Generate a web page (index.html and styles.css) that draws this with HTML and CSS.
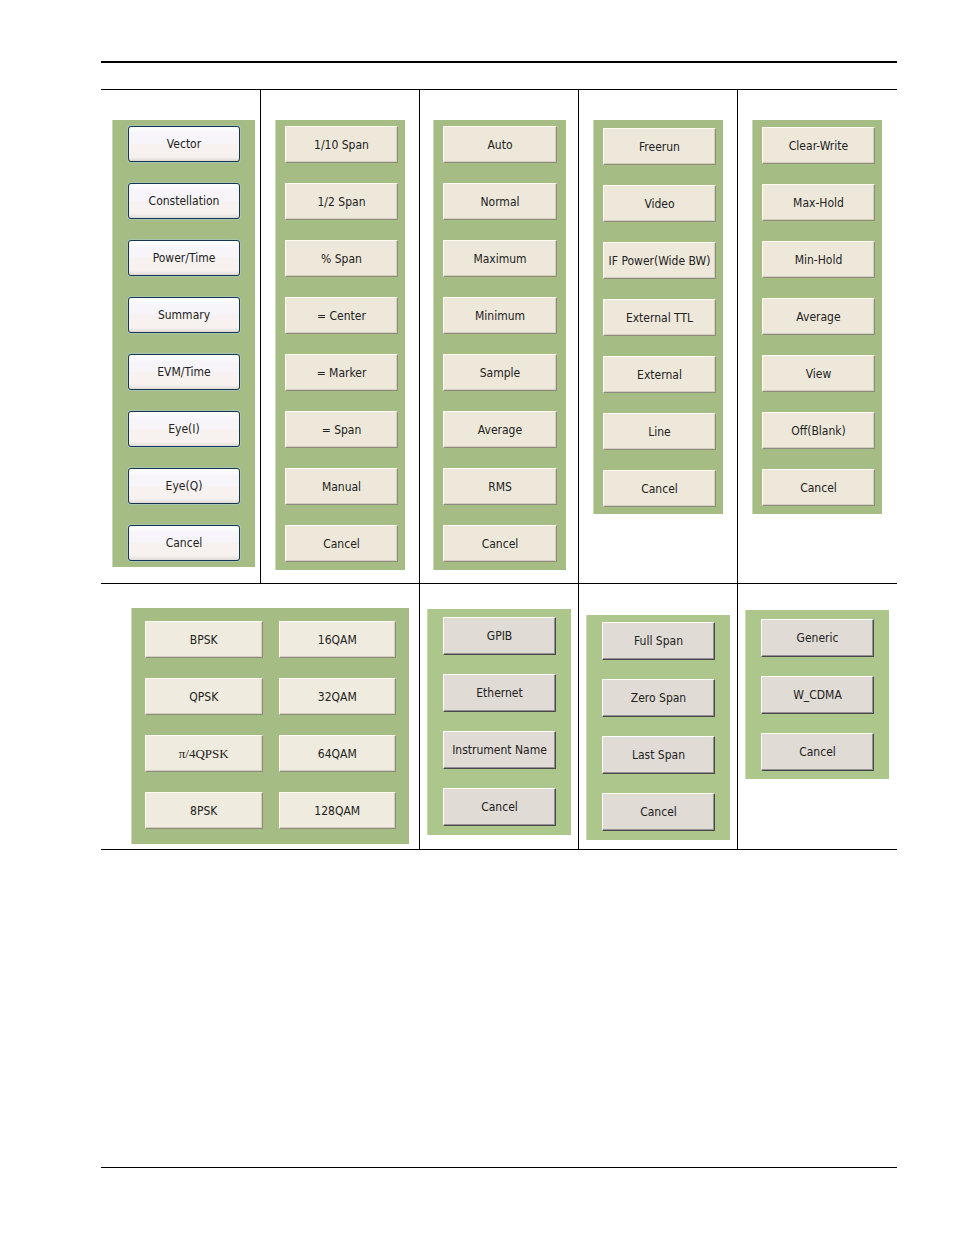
FILE: index.html
```html
<!DOCTYPE html>
<html lang="en">

<head>
    <meta charset="UTF-8">
    <meta name="viewport" content="width=device-width, initial-scale=1.0">
    <title>Softkey Menus</title>
    <link rel="stylesheet" href="styles.css">
</head>

<body>
    <div class="page">
        <header class="page-header"></header>

        <main class="menu-grid">
            <div class="cell first">
                <div class="panel glossy">
                    <button type="button">Vector</button>
                    <button type="button">Constellation</button>
                    <button type="button">Power/Time</button>
                    <button type="button">Summary</button>
                    <button type="button">EVM/Time</button>
                    <button type="button">Eye(I)</button>
                    <button type="button">Eye(Q)</button>
                    <button type="button">Cancel</button>
                </div>
            </div>
            <div class="cell">
                <div class="panel">
                    <button type="button">1/10 Span</button>
                    <button type="button">1/2 Span</button>
                    <button type="button">% Span</button>
                    <button type="button">= Center</button>
                    <button type="button">= Marker</button>
                    <button type="button">= Span</button>
                    <button type="button">Manual</button>
                    <button type="button">Cancel</button>
                </div>
            </div>
            <div class="cell">
                <div class="panel detector">
                    <button type="button">Auto</button>
                    <button type="button">Normal</button>
                    <button type="button">Maximum</button>
                    <button type="button">Minimum</button>
                    <button type="button">Sample</button>
                    <button type="button">Average</button>
                    <button type="button">RMS</button>
                    <button type="button">Cancel</button>
                </div>
            </div>
            <div class="cell">
                <div class="panel trigger">
                    <button type="button">Freerun</button>
                    <button type="button">Video</button>
                    <button type="button">IF Power(Wide BW)</button>
                    <button type="button">External TTL</button>
                    <button type="button">External</button>
                    <button type="button">Line</button>
                    <button type="button">Cancel</button>
                </div>
            </div>
            <div class="cell">
                <div class="panel trace">
                    <button type="button">Clear-Write</button>
                    <button type="button">Max-Hold</button>
                    <button type="button">Min-Hold</button>
                    <button type="button">Average</button>
                    <button type="button">View</button>
                    <button type="button">Off(Blank)</button>
                    <button type="button">Cancel</button>
                </div>
            </div>

            <div class="cell first wide">
                <div class="panel modulation">
                    <button type="button">BPSK</button>
                    <button type="button">16QAM</button>
                    <button type="button">QPSK</button>
                    <button type="button">32QAM</button>
                    <button type="button" class="serif">π/4QPSK</button>
                    <button type="button">64QAM</button>
                    <button type="button">8PSK</button>
                    <button type="button">128QAM</button>
                </div>
            </div>
            <div class="cell short">
                <div class="panel gray">
                    <button type="button">GPIB</button>
                    <button type="button">Ethernet</button>
                    <button type="button">Instrument Name</button>
                    <button type="button">Cancel</button>
                </div>
            </div>
            <div class="cell short">
                <div class="panel gray span">
                    <button type="button">Full Span</button>
                    <button type="button">Zero Span</button>
                    <button type="button">Last Span</button>
                    <button type="button">Cancel</button>
                </div>
            </div>
            <div class="cell short">
                <div class="panel gray standard">
                    <button type="button">Generic</button>
                    <button type="button">W_CDMA</button>
                    <button type="button">Cancel</button>
                </div>
            </div>
        </main>

        <footer class="page-footer"></footer>
    </div>
</body>

</html>
```
FILE: styles.css
```css
* {
    box-sizing: border-box;
}

body {
    margin: 0;
    background-color: #fff;
    color: #000;
    font-family: "DejaVu Sans Condensed", "DejaVu Sans", sans-serif;
    font-size: 12px;
}

.page {
    display: flex;
    flex-direction: column;
    min-height: 100vh;
    padding: 61px 57px 67px 101px;
}

.page-header {
    border-top: 2px solid #000;
    margin-bottom: 26px;
}

.page-footer {
    border-top: 1px solid #000;
    margin-top: auto;
}

/* menu table */
.menu-grid {
    display: grid;
    grid-template-columns: repeat(4, 159fr) 160fr;
    border-bottom: 1px solid #000;
}

.cell {
    display: flex;
    align-items: flex-start;
    border-top: 1px solid #000;
    border-left: 1px solid #000;
    padding: 30px 0 13px 14px;
}

.cell.first {
    border-left: none;
    padding-left: 11px;
}

.cell.wide {
    grid-column: span 2;
    padding: 24px 0 5px 30px;
}

.cell.short {
    padding: 25px 0 5px 7px;
}

/* green softkey panels */
.panel {
    display: grid;
    gap: 20px 16px;
    width: 130px;
    padding: 6px 7px 8px 9px;
    background-color: #a5bd84;
    border-left: 1px solid #c9d8b5;
}

.panel.glossy {
    gap: 21px;
    width: 143px;
    padding: 6px 15px;
}

.panel.detector {
    width: 133px;
    padding: 6px 9px 8px;
    margin-left: -1px;
}

.panel.trigger {
    padding-top: 8px;
    padding-bottom: 7px;
}

.panel.trace {
    padding-top: 7px;
}

.panel.modulation {
    grid-template-columns: 1fr 1fr;
    width: 278px;
    padding: 13px 13px 15px;
}

.panel.gray {
    row-gap: 19px;
    width: 144px;
    padding: 8px 15px 9px;
    background-color: #adc68c;
}

.panel.span {
    margin-top: 6px;
    padding-top: 7px;
}

.panel.standard {
    margin-top: 1px;
    padding-top: 9px;
    padding-bottom: 8px;
}

button {
    height: 37px;
    padding: 0;
    background-color: #ede8da;
    border: 1px solid;
    border-color: #fffdf2 #8f8b7c #8f8b7c #fffdf2;
    box-shadow: inset -1px -1px 0 #d3cebd;
    color: #222;
    font-family: inherit;
    font-size: 12px;
    line-height: 16px;
    white-space: nowrap;
    cursor: pointer;
}

.glossy button {
    height: 36px;
    background: linear-gradient(#fff, #f7f5fa 20%, #f7f5fa 48%, #f7f2ef 52%, #f7f2ef 88%, #dedad7);
    border: 1px solid #16354f;
    border-radius: 3px;
    box-shadow: 0 0 0 1px #a9c5ad;
}

.modulation button {
    background-color: #efebde;
}

.gray button {
    height: 38px;
    background-color: #e0dbd4;
    border-color: #fff #4a484a #4a484a #fff;
    box-shadow: inset -1px -1px 0 #949194;
}

button.serif {
    font-family: "Liberation Serif", serif;
    font-size: 13px;
}
```
